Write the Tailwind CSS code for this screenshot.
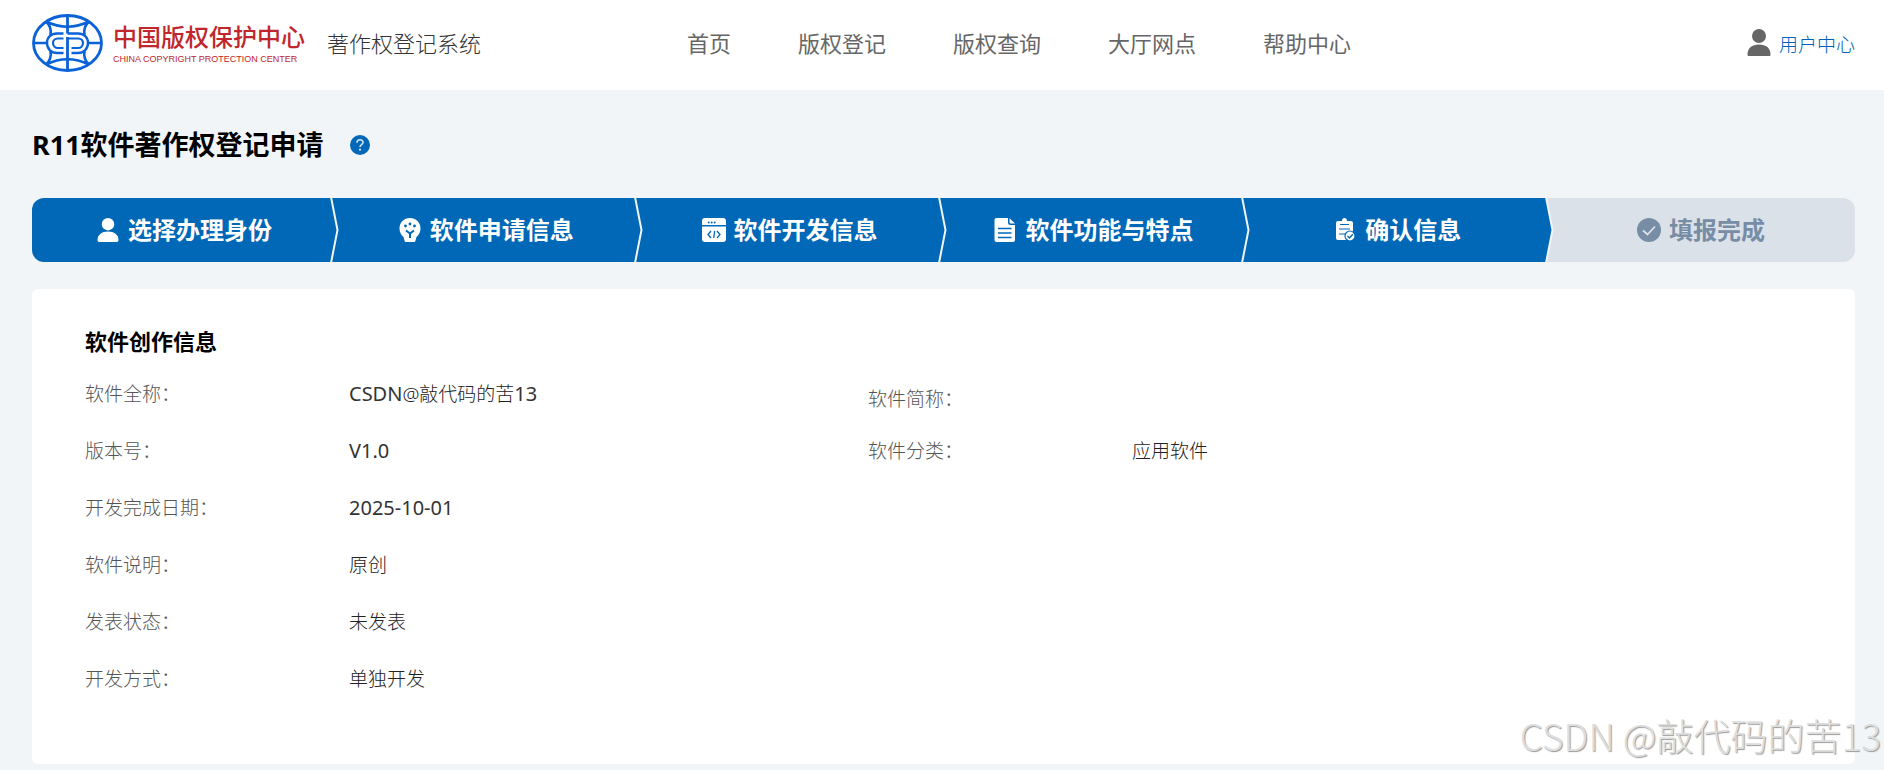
<!DOCTYPE html>
<html lang="zh-CN">
<head>
<meta charset="utf-8">
<meta name="viewport" content="width=device-width, initial-scale=1">
<title>R11软件著作权登记申请</title>
<script src="https://cdn.jsdelivr.net/npm/@tailwindcss/browser@4"></script>
</head>
<body class="relative min-h-screen bg-[#f1f5f8] font-['Noto_Sans','Noto_Sans_CJK_SC',sans-serif] text-[#333]">

<header class="flex h-[90px] items-center bg-white pr-[29px] pb-[4px] pl-8">
  <a href="#" class="flex items-center gap-[10px]" aria-label="中国版权保护中心">
    <svg class="h-[58px] w-[71px]" viewBox="0 0 71 58" fill="none" stroke="#0a62d8">
      <ellipse cx="35.500" cy="29" rx="34" ry="27.500" stroke-width="2.800"/>
      <path stroke-width="2.800" d="M35.500 1v18.500M35.500 23v34"/>
      <path stroke-width="2.600" d="M14 7.500Q35.500 18 57 7.500M14 50.500Q35.500 40 57 50.500M14 7.500Q20 13 18.500 21M57 7.500Q51 13 52.500 21M14 50.500Q20 45 18.500 37M57 50.500Q51 45 52.500 37M1 29h14M56 29h14"/>
      <path stroke-width="2.400" d="M31.500 19.500H25c-6 0-10 4-10 9.500s4 10 10 10h6.500M35.500 19.500H46c6 0 10 4 10 9.500s-4 10-10 10h-6.500"/>
      <path stroke-width="2.200" d="M31.500 24.500H26c-3 0-5 2-5 4.500s2 5 5 5h5.500M35.500 24.500H46c3 0 5 2 5 4.500s-2 5-5 5h-6.500"/>
    </svg>
    <span class="flex flex-col text-[#c0262b]">
      <span class="text-2xl leading-8 font-medium">中国版权保护中心</span>
      <span class="font-['Liberation_Sans',sans-serif] text-[9px] leading-3">CHINA COPYRIGHT PROTECTION CENTER</span>
    </span>
  </a>
  <span class="ml-[22px] text-[22px] leading-8 font-light text-[#333]">著作权登记系统</span>
  <nav class="ml-[206px] flex gap-[67px] text-[22px] leading-8 text-[#666]">
    <a href="#">首页</a>
    <a href="#">版权登记</a>
    <a href="#">版权查询</a>
    <a href="#">大厅网点</a>
    <a href="#">帮助中心</a>
  </nav>
  <a href="#" class="ml-auto flex items-center gap-2 text-[19px] leading-7 font-light text-[#005fb8]">
    <svg class="h-7 w-6" viewBox="0 0 24 28" fill="#666">
      <circle cx="12" cy="7" r="7"/>
      <path d="M.500 25.500C.500 19 5 15.500 12 15.500s11.500 3.500 11.500 10c0 1-.5 1.500-1.500 1.500H2c-1 0-1.500-.5-1.500-1.500z"/>
    </svg>
    <span class="pt-1">用户中心</span>
  </a>
</header>

<main class="pt-[37px] pr-[29px] pb-[6px] pl-8">
  <div class="flex items-center gap-[26px]">
    <h1 class="text-[27px] leading-9 font-bold text-black">R11软件著作权登记申请</h1>
    <button type="button" aria-label="帮助">
      <svg class="size-5" viewBox="0 0 20 20">
        <circle cx="10" cy="10" r="10" fill="#0068b7"/>
        <path d="M7 7.800C7 5.800 8.200 4.700 10 4.700s3 1.100 3 2.700c0 2.200-3 2.300-3 4.600" fill="none" stroke="#cfe2f3" stroke-width="1.600"/>
        <circle cx="10" cy="14.700" r="1.100" fill="#cfe2f3"/>
      </svg>
    </button>
  </div>

  <ol class="mt-[35px] grid h-16 grid-cols-6 overflow-hidden rounded-xl text-2xl leading-8 font-bold text-white">
    <li class="relative flex items-center justify-center gap-2 bg-[#0068b7]">
      <svg class="size-6" viewBox="0 0 24 24" fill="#fff"><circle cx="12" cy="6.200" r="6.200"/><path d="M1.500 22C1.500 16.500 6 13.500 12 13.500s10.500 3 10.500 8.500c0 1.300-.7 2-2 2h-17c-1.300 0-2-.7-2-2z"/></svg>
      选择办理身份
      <svg class="absolute top-0 -right-[3px] z-10 h-16 w-[10px]" viewBox="0 0 10 64" fill="none"><path d="M2 -1L8.500 32 2 65" stroke="#f1f5f9" stroke-width="2"/></svg>
    </li>
    <li class="relative flex items-center justify-center gap-2 bg-[#0068b7] pr-1">
      <svg class="size-6" viewBox="0 0 24 24"><path fill="#fff" d="M12 0C6 0 1.500 4.500 1.500 10.500c0 3.500 1.500 6.500 4 8.500L6.500 22.500C6.800 23.500 7.300 24 8.300 24h7.400c1 0 1.500-.5 1.800-1.500l1-3.500c2.500-2 4-5 4-8.500C22.500 4.500 18 0 12 0z"/><g fill="#0068b7"><circle cx="12" cy="6" r="1.400"/><circle cx="7.500" cy="8" r="1.400"/><circle cx="16.500" cy="8" r="1.400"/></g><path fill="none" stroke="#0068b7" stroke-width="2" d="M8 12.500l4 3 4-3M12 15v5"/></svg>
      软件申请信息
      <svg class="absolute top-0 -right-[3px] z-10 h-16 w-[10px]" viewBox="0 0 10 64" fill="none"><path d="M2 -1L8.500 32 2 65" stroke="#f1f5f9" stroke-width="2"/></svg>
    </li>
    <li class="relative flex items-center justify-center gap-2 bg-[#0068b7] pr-1">
      <svg class="size-6" viewBox="0 0 24 24"><path fill="#fff" d="M3 0h18a3 3 0 0 1 3 3v4H0V3a3 3 0 0 1 3-3zM0 8.500h24V21a3 3 0 0 1-3 3H3a3 3 0 0 1-3-3z"/><g fill="#0068b7"><circle cx="6.700" cy="4.500" r="1"/><circle cx="9.700" cy="4.500" r="1"/><circle cx="12.700" cy="4.500" r="1"/></g><path fill="none" stroke="#0068b7" stroke-width="1.300" d="M9 13l-3 3.500L9 20M15 13l3 3.500-3 3.500M12.700 13l-1 7"/></svg>
      软件开发信息
      <svg class="absolute top-0 -right-[3px] z-10 h-16 w-[10px]" viewBox="0 0 10 64" fill="none"><path d="M2 -1L8.500 32 2 65" stroke="#f1f5f9" stroke-width="2"/></svg>
    </li>
    <li class="relative flex items-center justify-center gap-2 bg-[#0068b7] pr-1">
      <svg class="size-6" viewBox="0 0 24 24"><path fill="#fff" d="M3.500 0H15v4.500A2.500 2.500 0 0 0 17.500 7H22v15a2 2 0 0 1-2 2H3.500a2 2 0 0 1-2-2V2a2 2 0 0 1 2-2zM16.500.300L22 5.500h-4a1.500 1.500 0 0 1-1.500-1.500z"/><path stroke="#0068b7" stroke-width="1.300" d="M5 10.500h13.500M5 15h13.500M5 19.500h13.500"/></svg>
      软件功能与特点
      <svg class="absolute top-0 -right-[3px] z-10 h-16 w-[10px]" viewBox="0 0 10 64" fill="none"><path d="M2 -1L8.500 32 2 65" stroke="#f1f5f9" stroke-width="2"/></svg>
    </li>
    <li class="relative flex items-center justify-center gap-2 bg-[#0068b7] pr-1">
      <svg class="size-6" viewBox="0 0 24 24"><path fill="#fff" d="M5 3h4c0-1.700 1-3 2.500-3S14 1.300 14 3h4a2 2 0 0 1 2 2v15a2 2 0 0 1-2 2H5a2 2 0 0 1-2-2V5a2 2 0 0 1 2-2z"/><path stroke="#0068b7" stroke-width="1.200" d="M7 6.500h9M6 11h11M6 16h6"/><circle cx="17" cy="18" r="5" fill="#fff" stroke="#0068b7" stroke-width="1.200"/><path fill="none" stroke="#0068b7" stroke-width="1.400" d="M14.500 18l2 2 3.300-3.700"/></svg>
      确认信息
      <svg class="absolute top-0 -right-[3px] z-10 h-16 w-[10px]" viewBox="0 0 10 64" fill="none"><path d="M2 -1L8.500 32 2 65H11V-1z" fill="#dbe1e8"/><path d="M0 -1H2L8.500 32 2 65H0z" fill="#0068b7"/><path d="M2 -1L8.500 32 2 65" stroke="#f1f5f9" stroke-width="2"/></svg>
    </li>
    <li class="flex items-center justify-center gap-2 bg-[#dbe1e8] pr-1 text-[#778ca5]">
      <svg class="size-6" viewBox="0 0 24 24"><circle cx="12" cy="12" r="12" fill="#778ca5"/><path fill="none" stroke="#dbe1e8" stroke-width="1.800" d="M6 12.500l4.500 4L18 8.500"/></svg>
      填报完成
    </li>
  </ol>

  <section class="mt-[27px] rounded-md bg-white px-[53px] pt-[34px] pb-[71px]">
    <h2 class="text-[22px] leading-9 font-bold text-black">软件创作信息</h2>
    <dl class="mt-[21px] grid grid-cols-[783fr_934fr] gap-y-[29px] text-[19px] leading-7">
      <div class="flex"><dt class="w-[264px] font-light text-[#555]">软件全称：</dt><dd class="text-xl leading-7">CSDN<span class="text-[19px] leading-7 font-light text-[#222]">@敲代码的苦</span>13</dd></div>
      <div class="flex items-end"><dt class="-mb-[5px] w-[264px] font-light text-[#555]">软件简称：</dt><dd></dd></div>
      <div class="flex"><dt class="w-[264px] font-light text-[#555]">版本号：</dt><dd class="text-xl leading-7">V1.0</dd></div>
      <div class="flex"><dt class="w-[264px] font-light text-[#555]">软件分类：</dt><dd class="font-light text-[#222]">应用软件</dd></div>
      <div class="col-span-2 flex"><dt class="w-[264px] font-light text-[#555]">开发完成日期：</dt><dd class="text-xl leading-7">2025-10-01</dd></div>
      <div class="col-span-2 flex"><dt class="w-[264px] font-light text-[#555]">软件说明：</dt><dd class="font-light text-[#222]">原创</dd></div>
      <div class="col-span-2 flex"><dt class="w-[264px] font-light text-[#555]">发表状态：</dt><dd class="font-light text-[#222]">未发表</dd></div>
      <div class="col-span-2 flex"><dt class="w-[264px] font-light text-[#555]">开发方式：</dt><dd class="font-light text-[#222]">单独开发</dd></div>
    </dl>
  </section>
</main>

<div class="pointer-events-none absolute right-[3px] bottom-[5px] font-['Noto_Sans_CJK_SC',sans-serif] text-[37px] leading-[60px] font-light text-[#dedede] [text-shadow:1px_1px_1px_#999]">CSDN @敲代码的苦13</div>
</body>
</html>
